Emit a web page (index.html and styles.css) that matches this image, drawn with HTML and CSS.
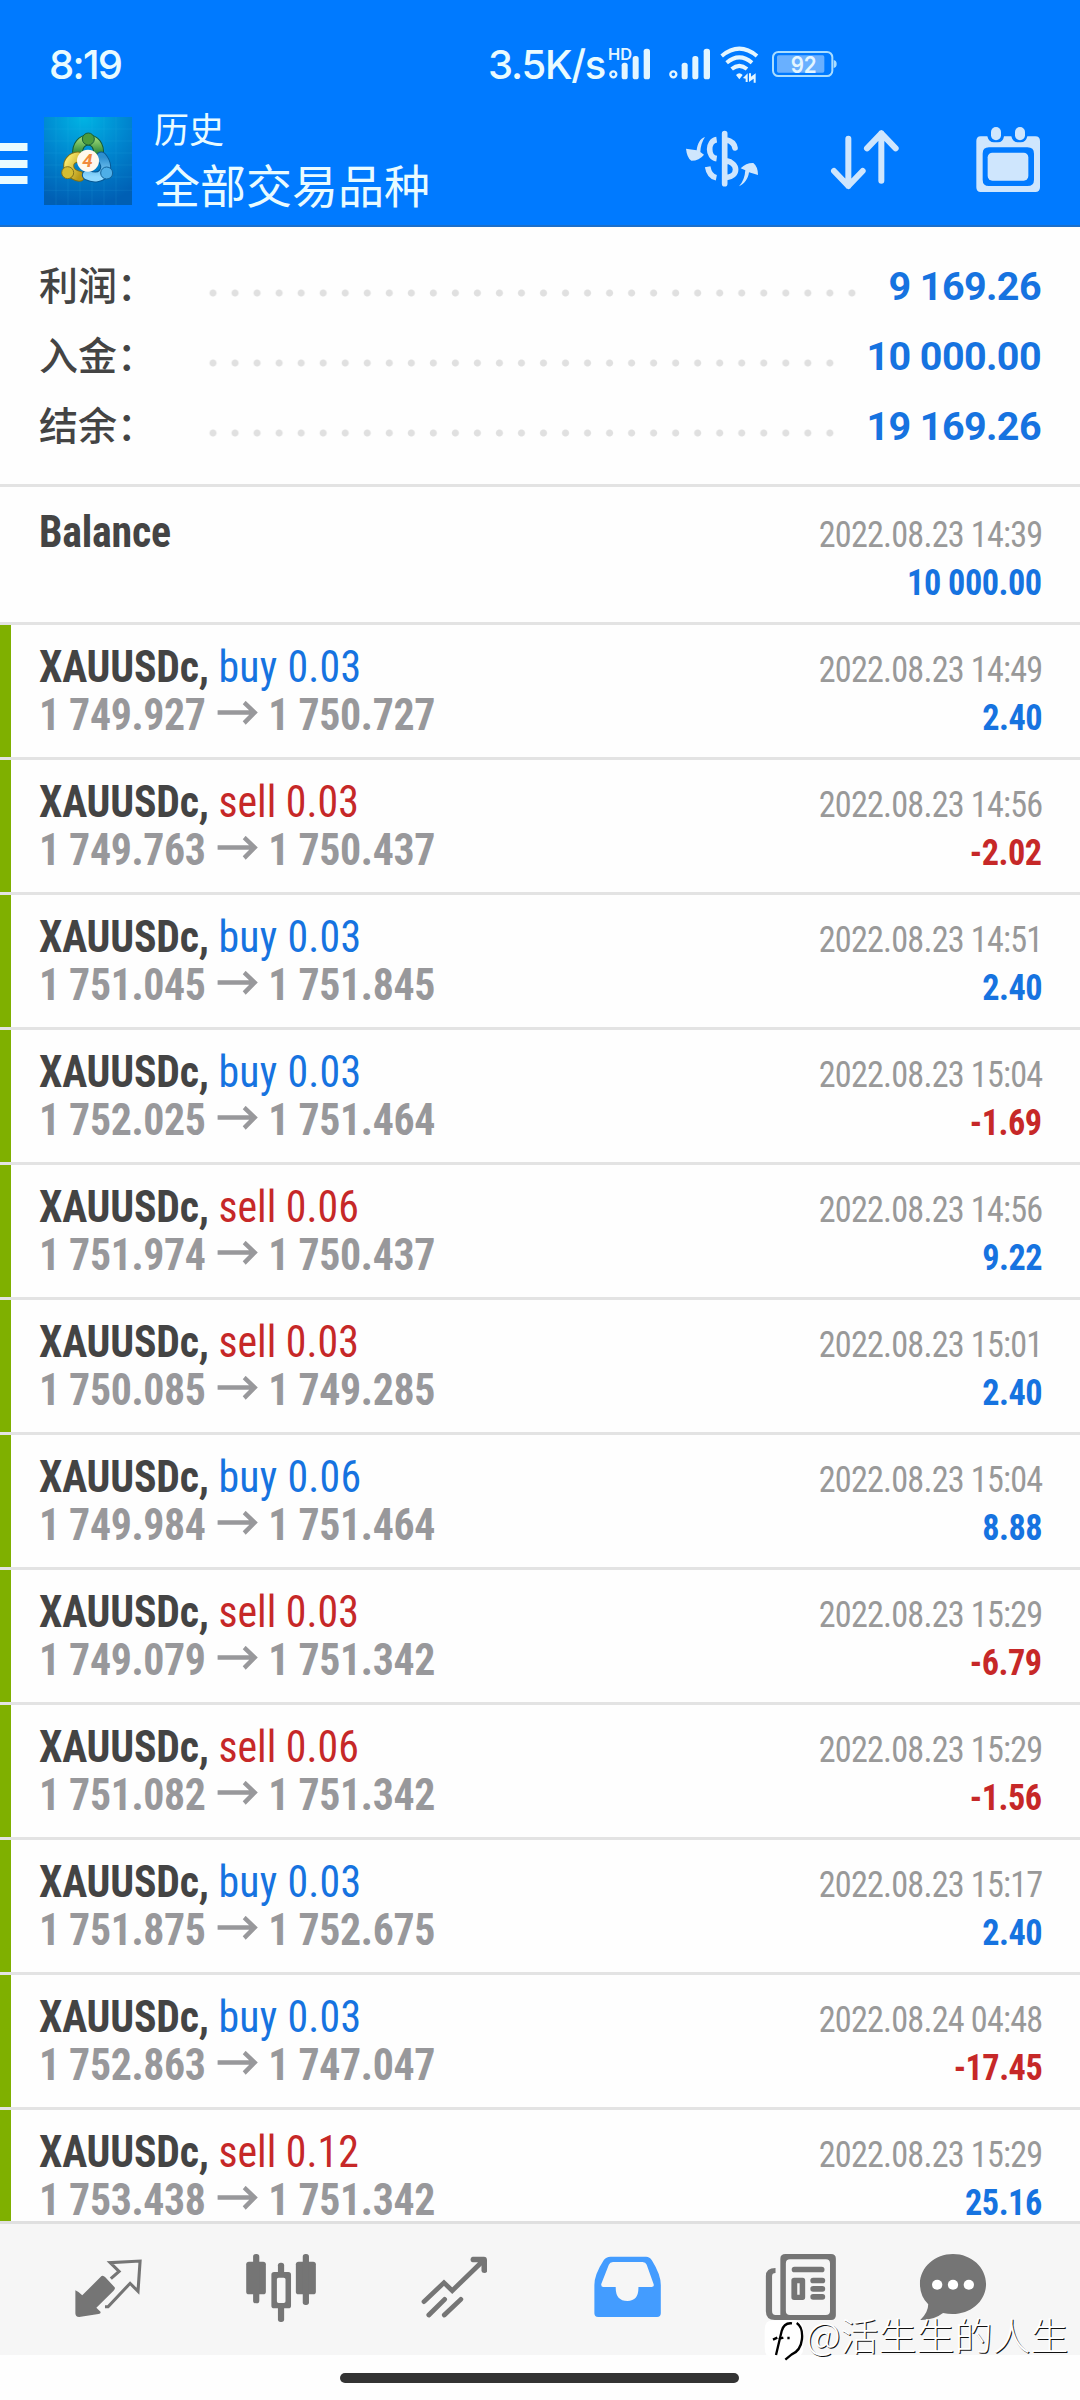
FILE: index.html
```html
<!DOCTYPE html>
<html lang="zh-CN">
<head>
<meta charset="utf-8">
<title>历史</title>
<link rel="stylesheet" href="styles.css">
</head>
<body>
<div class="screen">
  <header class="top">
    <div class="status">
      <span class="clock">8:19</span>
      <span class="speed">3.5K/s</span>
      <svg class="signals" width="250" height="44" viewBox="410 45 750 132" fill="#e4f6ff">
        <text x="413" y="89" font-size="46" font-weight="600" textLength="72" lengthAdjust="spacingAndGlyphs">HD</text>
        <circle cx="429" cy="133" r="9" fill="none" stroke="#e4f6ff" stroke-width="7"/>
        <rect x="454" y="98" width="18" height="50" rx="8"/><rect x="487" y="78" width="18" height="70" rx="8"/><rect x="520" y="56" width="19" height="92" rx="8"/>
        <circle cx="609" cy="133" r="9" fill="none" stroke="#e4f6ff" stroke-width="7"/>
        <rect x="634" y="98" width="18" height="50" rx="8"/><rect x="666" y="78" width="18" height="70" rx="8"/><rect x="700" y="56" width="19" height="92" rx="8"/>
        <g fill="none" stroke="#e4f6ff" stroke-width="12"><path d="M754 78Q807 34 860 78M769 98Q807 66 845 98M784 117Q807 98 830 117"/></g>
        <path d="M797 135q10-10 20 0l-10 13zM818 144l14-14v26h-6v-10zM836 130h6v10l14-10v28h-6v-12l-14 10z"/>
        <rect x="908" y="66" width="178" height="72" rx="16" fill="none" stroke="#a9ddff" stroke-width="6"/>
        <rect x="920" y="76" width="142" height="52" rx="5" fill="#69b0ff"/><path d="M1090 90q9 2 9 12t-9 12z" fill="#a9ddff"/>
        <text x="961" y="128" font-size="70" font-weight="600" textLength="78" lengthAdjust="spacingAndGlyphs">92</text>
      </svg>
    </div>
    <div class="toolbar">
      <svg class="menu" width="28" height="42" fill="#e9fbff"><path d="M0 0h27.500v8H0zM0 17h27.500v8H0zM0 33h27.500v8H0z"/></svg>
      <svg class="logo" width="88" height="88" viewBox="132 261 264 264">
        <defs>
          <radialGradient id="bg" cx=".45" cy="0" r="1"><stop offset="0" stop-color="#00b4e4"/><stop offset=".5" stop-color="#0086cf"/><stop offset="1" stop-color="#005fb4"/></radialGradient>
          <linearGradient id="gr" x2="0" y2="1"><stop stop-color="#8fd06e"/><stop offset="1" stop-color="#1f7d33"/></linearGradient>
          <linearGradient id="ye" x2="1" y2="1"><stop stop-color="#f8e66a"/><stop offset="1" stop-color="#b99a17"/></linearGradient>
          <linearGradient id="bl" x2="0" y2="1"><stop stop-color="#2e8fcf"/><stop offset="1" stop-color="#8fd8ff"/></linearGradient>
        </defs>
        <path fill="url(#bg)" d="M132 261h264v264H132z"/>
        <path d="M168 261v264M204 261v264M240 261v264M276 261v264M312 261v264M348 261v264M132 297h264M132 333h264M132 369h264M132 405h264M132 441h264M132 481h264" stroke="#35b9ed" stroke-opacity=".2" stroke-width="2"/>
        <g fill="none" stroke-linecap="round">
          <path d="M233 375c-6-60 70-60 62 0" stroke="#145c37" stroke-width="33"/><path d="M233 375c-6-60 70-60 62 0" stroke="url(#gr)" stroke-width="27"/>
          <path d="M234 381c-38 4-38 50 5 58" stroke="#7c711a" stroke-width="33"/><path d="M234 381c-38 4-38 50 5 58" stroke="url(#ye)" stroke-width="27"/>
          <path d="M304 381c32 38 0 74-42 54" stroke="#075894" stroke-width="33"/><path d="M304 381c32 38 0 74-42 54" stroke="url(#bl)" stroke-width="27"/>
        </g>
        <circle cx="265" cy="327" r="18" fill="#4b9b3e" stroke="#17603c" stroke-width="3"/><circle cx="203" cy="428" r="18" fill="#d5bd31" stroke="#82731c" stroke-width="3"/><circle cx="320" cy="429" r="18" fill="#4eafe8" stroke="#13639a" stroke-width="3"/>
        <circle cx="264" cy="392" r="33" fill="#fff8ed"/><text x="247" y="412" font-size="56" font-weight="700" font-style="italic" fill="#f08a3c">4</text>
      </svg>
      <div class="titles"><div class="title">历史</div><div class="subtitle">全部交易品种</div></div>
      <svg class="actions" width="360" height="66" viewBox="75 80 1080 198" fill="#cfe6fd">
        <g fill="none" stroke="#cfe6fd" stroke-width="17" stroke-linecap="round">
          <path d="M194 103V253M198 121Q222 126 225 146M197 184C238 191 235 232 198 235"/>
          <path stroke-linecap="butt" d="M170 121C142 125 142 174 170 178M143 202Q148 231 169 235"/>
          <path d="M565 118V260M522 215L565 260L608 215M664 244V102M621 147L664 102L707 147" stroke-width="18" stroke-linejoin="round"/>
        </g>
        <path d="M135 113C120 118 113 132 110 153L78 148Q81 176 94 184Q118 184 132 166L121 158Q122 132 135 113ZM237 261C253 255 265 237 267 219L294 227Q294 202 280 191Q259 190 242 207L256 213Q254 243 237 261Z"/>
        <path fill-rule="evenodd" d="M962 111h20q4 18 20 18h12q15 0 18-18h22q4 18 20 18h8q16 0 20-18h24q14 0 14 14v139q0 14-14 14H962q-13 0-13-14V125q0-14 13-14ZM987 144q-19 0-19 19v78q0 19 19 19h115q20 0 20-19v-78q0-19-20-19Z"/>
        <rect x="983" y="160" width="122" height="84" rx="14"/><rect x="993" y="83" width="30" height="40" rx="15"/><rect x="1065" y="83" width="30" height="40" rx="15"/>
      </svg>
    </div>
  </header>

  <section class="summary">
    <div class="sum"><span class="label">利润：</span><span class="dots"></span><span class="amount">9 169.26</span></div>
    <div class="sum"><span class="label">入金：</span><span class="dots"></span><span class="amount">10 000.00</span></div>
    <div class="sum"><span class="label">结余：</span><span class="dots"></span><span class="amount">19 169.26</span></div>
  </section>

  <main class="deals">
    <div class="deal plain"><div class="line"><b>Balance</b><time>2022.08.23 14:39</time></div><div class="line"><span>&nbsp;</span><span class="value">10 000.00</span></div></div>
    <div class="deal"><div class="line"><span><b>XAUUSDc,</b> <i class="buy">buy 0.03</i></span><time>2022.08.23 14:49</time></div><div class="line"><span class="price">1 749.927<svg class="arrow" viewBox="0 0 42 24"><path d="M0 11.500H40M28 1.500L39 11.500L28 22"/></svg>1 750.727</span><span class="value">2.40</span></div></div>
    <div class="deal"><div class="line"><span><b>XAUUSDc,</b> <i class="sell">sell 0.03</i></span><time>2022.08.23 14:56</time></div><div class="line"><span class="price">1 749.763<svg class="arrow" viewBox="0 0 42 24"><path d="M0 11.500H40M28 1.500L39 11.500L28 22"/></svg>1 750.437</span><span class="value loss">-2.02</span></div></div>
    <div class="deal"><div class="line"><span><b>XAUUSDc,</b> <i class="buy">buy 0.03</i></span><time>2022.08.23 14:51</time></div><div class="line"><span class="price">1 751.045<svg class="arrow" viewBox="0 0 42 24"><path d="M0 11.500H40M28 1.500L39 11.500L28 22"/></svg>1 751.845</span><span class="value">2.40</span></div></div>
    <div class="deal"><div class="line"><span><b>XAUUSDc,</b> <i class="buy">buy 0.03</i></span><time>2022.08.23 15:04</time></div><div class="line"><span class="price">1 752.025<svg class="arrow" viewBox="0 0 42 24"><path d="M0 11.500H40M28 1.500L39 11.500L28 22"/></svg>1 751.464</span><span class="value loss">-1.69</span></div></div>
    <div class="deal"><div class="line"><span><b>XAUUSDc,</b> <i class="sell">sell 0.06</i></span><time>2022.08.23 14:56</time></div><div class="line"><span class="price">1 751.974<svg class="arrow" viewBox="0 0 42 24"><path d="M0 11.500H40M28 1.500L39 11.500L28 22"/></svg>1 750.437</span><span class="value">9.22</span></div></div>
    <div class="deal"><div class="line"><span><b>XAUUSDc,</b> <i class="sell">sell 0.03</i></span><time>2022.08.23 15:01</time></div><div class="line"><span class="price">1 750.085<svg class="arrow" viewBox="0 0 42 24"><path d="M0 11.500H40M28 1.500L39 11.500L28 22"/></svg>1 749.285</span><span class="value">2.40</span></div></div>
    <div class="deal"><div class="line"><span><b>XAUUSDc,</b> <i class="buy">buy 0.06</i></span><time>2022.08.23 15:04</time></div><div class="line"><span class="price">1 749.984<svg class="arrow" viewBox="0 0 42 24"><path d="M0 11.500H40M28 1.500L39 11.500L28 22"/></svg>1 751.464</span><span class="value">8.88</span></div></div>
    <div class="deal"><div class="line"><span><b>XAUUSDc,</b> <i class="sell">sell 0.03</i></span><time>2022.08.23 15:29</time></div><div class="line"><span class="price">1 749.079<svg class="arrow" viewBox="0 0 42 24"><path d="M0 11.500H40M28 1.500L39 11.500L28 22"/></svg>1 751.342</span><span class="value loss">-6.79</span></div></div>
    <div class="deal"><div class="line"><span><b>XAUUSDc,</b> <i class="sell">sell 0.06</i></span><time>2022.08.23 15:29</time></div><div class="line"><span class="price">1 751.082<svg class="arrow" viewBox="0 0 42 24"><path d="M0 11.500H40M28 1.500L39 11.500L28 22"/></svg>1 751.342</span><span class="value loss">-1.56</span></div></div>
    <div class="deal"><div class="line"><span><b>XAUUSDc,</b> <i class="buy">buy 0.03</i></span><time>2022.08.23 15:17</time></div><div class="line"><span class="price">1 751.875<svg class="arrow" viewBox="0 0 42 24"><path d="M0 11.500H40M28 1.500L39 11.500L28 22"/></svg>1 752.675</span><span class="value">2.40</span></div></div>
    <div class="deal"><div class="line"><span><b>XAUUSDc,</b> <i class="buy">buy 0.03</i></span><time>2022.08.24 04:48</time></div><div class="line"><span class="price">1 752.863<svg class="arrow" viewBox="0 0 42 24"><path d="M0 11.500H40M28 1.500L39 11.500L28 22"/></svg>1 747.047</span><span class="value loss">-17.45</span></div></div>
    <div class="deal"><div class="line"><span><b>XAUUSDc,</b> <i class="sell">sell 0.12</i></span><time>2022.08.23 15:29</time></div><div class="line"><span class="price">1 753.438<svg class="arrow" viewBox="0 0 42 24"><path d="M0 11.500H40M28 1.500L39 11.500L28 22"/></svg>1 751.342</span><span class="value">25.16</span></div></div>
  </main>

  <nav class="tabs">
    <svg width="180" height="131" viewBox="0 72 523 393" preserveAspectRatio="none"><path d="M219 271Q227 274 239 286L295 228Q301 226 306 232L333 262Q336 266 330 272L280 323L292 335Q294 341 286 342L230 351Q219 351 219 340Z"/><path fill="none" stroke="#757575" stroke-width="9" d="M322 236L346 214L320 188L407 183L401 274L378 250L314 320L305 320"/></svg>
    <svg width="180" height="131" viewBox="523 72 522 393" preserveAspectRatio="none"><rect x="715" y="185" width="57" height="98" rx="8"/><rect x="735" y="162" width="18" height="148" rx="8"/><rect x="859" y="185" width="58" height="98" rx="8"/><rect x="879" y="162" width="18" height="153" rx="8"/><rect x="807" y="188" width="18" height="38" rx="8"/><rect x="807" y="310" width="18" height="56" rx="8"/><path fill-rule="evenodd" d="M796 216h41q8 0 8 8v93q0 8-8 8h-41q-8 0-8-8v-93q0-8 8-8ZM809 233q-5 0-5 5v66q0 5 5 5h15q5 0 5-5v-66q0-5-5-5Z"/></svg>
    <svg width="180" height="131" viewBox="1045 72 523 393" preserveAspectRatio="none"><path fill="none" stroke="#757575" stroke-width="14" stroke-linecap="round" d="M1231 305L1289 248L1313 272L1402 183M1245 345L1291 298M1290 345L1338 298"/><path d="M1372 170H1405Q1414 170 1414 180V215Q1412 219 1406 219Q1399 219 1398 213V196L1386 187H1372Q1366 186 1366 179Q1366 172 1372 170Z"/></svg>
    <svg width="180" height="131" viewBox="0 72 523 393" preserveAspectRatio="none"><path fill="#439cff" fill-rule="evenodd" d="M205 170H308Q319 170 325 181Q351 224 351 255V340Q351 351 340 351H169Q158 351 158 340V255Q158 224 185 181Q192 170 205 170ZM212 186Q203 186 200 194L178 252Q177 261 184 261H220Q219 303 254 303Q287 303 286 261H324Q333 261 330 252L310 194Q307 186 298 186Z"/></svg>
    <svg width="180" height="131" viewBox="523 72 522 393" preserveAspectRatio="none"><path fill-rule="evenodd" d="M713 162H845Q859 162 859 176V346Q859 360 845 360H682Q656 360 656 334V228Q656 204 684 204V219Q674 219 674 229V333Q674 345 684 345H698V176Q698 162 713 162ZM726 178Q714 178 714 190V333Q714 345 726 345H830Q842 345 842 333V190Q842 178 830 178ZM738 233H763Q770 233 770 241V292Q770 300 763 300H738Q730 300 730 292V241Q730 233 738 233ZM747 250V284H754V250Z"/><rect x="731" y="200" width="95" height="17" rx="8"/><rect x="785" y="233" width="43" height="17" rx="8"/><rect x="785" y="258" width="43" height="17" rx="8"/><rect x="785" y="282" width="43" height="17" rx="8"/></svg>
    <svg width="180" height="131" viewBox="1045 72 523 393" preserveAspectRatio="none"><path d="M1199 162C1253 162 1295 203 1295 252C1295 311 1236 355 1170 339Q1143 361 1104 360Q1127 338 1127 313Q1103 289 1103 252C1103 201 1147 162 1199 162Z"/><circle cx="1153" cy="254" r="15" fill="#fff"/><circle cx="1199" cy="254" r="15" fill="#fff"/><circle cx="1245" cy="254" r="15" fill="#fff"/></svg>
  </nav>
  <div class="gesture"><span class="home"></span></div>

  <div class="watermark">
    <svg width="40" height="44" viewBox="0 0 116 132"><path fill="#fff" d="M22 4h70q24 0 24 30v50q0 32-28 32L64 131l-4-15H22Q0 116 0 84V34Q0 4 22 4Z"/><path fill="none" stroke="#000" stroke-width="7" d="M34 108L51 36Q58 10 82 13M25 62L38 56M42 60L56 56M96 12Q115 24 112 60Q108 96 80 107L62 122M68 57h7"/></svg>
    <span>@活生生的人生</span>
  </div>
</div>
</body>
</html>
```
FILE: styles.css
```css
* { box-sizing: border-box; }
body { margin: 0; }
.screen {
  position: relative;
  display: flex;
  flex-direction: column;
  width: 1080px;
  height: 2400px;
  overflow: hidden;
  background: #fefefe;
  font-family: Roboto, "Noto Sans CJK SC", sans-serif;
}
svg { display: block; flex: none; }

.top { height: 227px; background: #007aff; border-bottom: 2px solid #1c6fca; color: #e9fbff; }
.status { display: flex; height: 100px; padding: 42px 0 0 49px; line-height: 46px; font-family: Inter, sans-serif; font-weight: 500; }
.clock { width: 439px; font-size: 40px; letter-spacing: -1.7px; }
.speed { width: 119px; font-size: 40px; white-space: nowrap; letter-spacing: -1.2px; }
.signals { margin-top: 3px; }
.toolbar { display: flex; height: 125px; }
.menu { margin: 43px 16px 0 0; }
.logo { margin-top: 17px; }
.titles { width: 531px; padding: 3px 0 0 22px; font-family: "Noto Sans CJK SC", sans-serif; font-weight: 400; white-space: nowrap; }
.title { font-size: 35px; line-height: 50px; }
.subtitle { font-size: 46px; line-height: 60px; }
.actions { margin: 26px 0 0 22px; }

.summary { height: 260px; padding: 23px 39px 0 39px; border-bottom: 3px solid #e3e3e3; }
.sum { display: flex; align-items: center; height: 70px; }
.label { width: 164px; padding-bottom: 4px; font: 500 39px/66px "Noto Sans CJK SC", sans-serif; color: #444; }
.dots { flex: 1; height: 22px; margin: 16px 23px 0 -1px; background: radial-gradient(circle, #e0e0e0 3px, transparent 4px) 0 0 / 22.04px 22px repeat-x; }
.amount { padding-top: 3px; font-weight: 700; font-size: 39.500px; letter-spacing: -0.6px; color: #1673e0; }

.deals { height: 1734px; overflow: hidden; font-family: "Roboto Condensed", Roboto, sans-serif; font-stretch: 75%; }
.deal { height: 135px; padding: 18px 38px 0 39px; border-bottom: 3px solid #e3e3e3; box-shadow: inset 11px 0 0 #7fb000; white-space: nowrap; }
.plain { height: 138px; padding-top: 21px; box-shadow: none; }
.line { display: flex; justify-content: space-between; align-items: baseline; height: 48px; font-size: 44px; line-height: 48px; color: #444; }
/* the list face is set slightly narrower than the condensed cut */
.line > * { transform: scaleX(0.95); transform-origin: left; }
.line > :last-child { transform-origin: right; }
.line b { font-weight: 700; letter-spacing: -0.2px; }
.line i { font-style: normal; }
.line time, .value { font-size: 36px; line-height: 40px; }
.line time { color: #999; letter-spacing: -0.85px; }
.price { font-weight: 700; color: #98989b; letter-spacing: -0.35px; }
.arrow { display: inline-block; width: 44px; height: 24px; margin: 0 10px 5px 12px; fill: none; stroke: #98989b; stroke-width: 4.500px; }
.value { font-weight: 700; color: #1673e0; letter-spacing: -0.5px; }
.line .buy { color: #1673e0; letter-spacing: 0.3px; }
.sell { color: #c62828; }
.line .loss { color: #c62828; }

.tabs { display: flex; height: 134px; background: #f6f6f6; border-top: 3px solid #e0e0e0; fill: #757575; }
.gesture { height: 45px; padding-top: 18px; }
.home { display: block; width: 399px; height: 10px; margin-left: 340px; border-radius: 5px; background: #333; }

.watermark { position: absolute; left: 764px; top: 2319px; display: flex; gap: 2px; color: #fff; font: 300 38px/38px "Noto Sans CJK SC", sans-serif; white-space: nowrap; text-shadow: 1px 1px 0 #111; }
.watermark span { margin-top: -4px; }
```
